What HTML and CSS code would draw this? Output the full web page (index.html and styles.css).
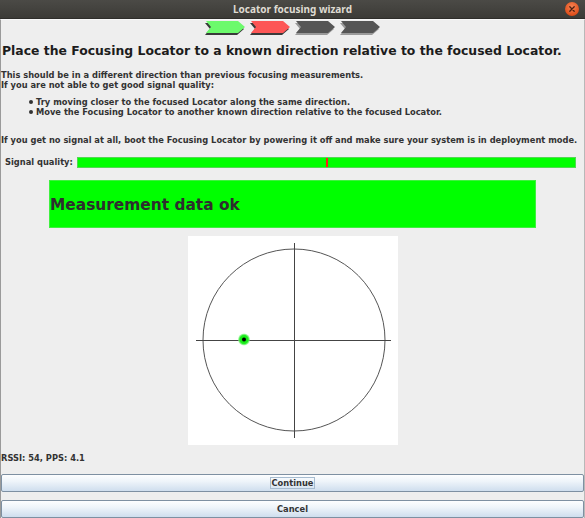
FILE: index.html
```html
<!DOCTYPE html>
<html>
<head>
<meta charset="utf-8">
<link rel="stylesheet" href="styles.css">
</head>
<body>
<div class="window">
  <div class="titlebar">
    <span></span>
    <span class="title">Locator focusing wizard</span>
    <span class="close"><svg width="14" height="14" viewBox="0 0 14 14"><path d="M4.8 4.8L9.2 9.2M9.2 4.8L4.8 9.2" stroke="#4a2012" stroke-width="1.3" stroke-linecap="round"/></svg></span>
  </div>
  <div class="content">
    <div class="steps">
      <svg class="step" width="40" height="14" viewBox="0 0 40 14"><polygon points="0,2 32,2 39,8 32,14 0,14 5,8" fill="#3a3a3a"/><polygon points="1,0 33,0 40,6 33,12 1,12 6,6" fill="#6cfa6c"/></svg>
      <svg class="step" width="40" height="14" viewBox="0 0 40 14"><polygon points="0,2 32,2 39,8 32,14 0,14 5,8" fill="#3a3a3a"/><polygon points="1,0 33,0 40,6 33,12 1,12 6,6" fill="#fd5656"/></svg>
      <svg class="step" width="40" height="14" viewBox="0 0 40 14"><polygon points="0,2 32,2 39,8 32,14 0,14 5,8" fill="#9a9a9a"/><polygon points="1,0 33,0 40,6 33,12 1,12 6,6" fill="#555555"/></svg>
      <svg class="step" width="40" height="14" viewBox="0 0 40 14"><polygon points="0,2 32,2 39,8 32,14 0,14 5,8" fill="#9a9a9a"/><polygon points="1,0 33,0 40,6 33,12 1,12 6,6" fill="#555555"/></svg>
    </div>
    <h1 class="heading">Place the Focusing Locator to a known direction relative to the focused Locator.</h1>
    <p class="desc">This should be in a different direction than previous focusing measurements.<br>If you are not able to get good signal quality:</p>
    <ul class="tips">
      <li>Try moving closer to the focused Locator along the same direction.</li>
      <li>Move the Focusing Locator to another known direction relative to the focused Locator.</li>
    </ul>
    <p class="note">If you get no signal at all, boot the Focusing Locator by powering it off and make sure your system is in deployment mode.</p>
    <div class="signal">
      <span class="signal-label">Signal quality:</span>
      <div class="signal-bar"></div>
    </div>
    <div class="status">Measurement data ok</div>
    <div class="plot">
      <svg width="210" height="209" viewBox="0 0 210 209">
        <defs>
          <radialGradient id="glow">
            <stop offset="0" stop-color="#00e600"/>
            <stop offset="0.7" stop-color="#22ee22"/>
            <stop offset="1" stop-color="#9ff79f" stop-opacity="0.6"/>
          </radialGradient>
        </defs>
        <rect width="210" height="209" fill="#ffffff"/>
        <circle cx="106" cy="104" r="91" fill="none" stroke="#555" stroke-width="1"/>
        <line x1="8" y1="104.5" x2="203" y2="104.5" stroke="#444" stroke-width="1"/>
        <line x1="106.5" y1="7" x2="106.5" y2="202" stroke="#444" stroke-width="1"/>
        <circle cx="56" cy="103.5" r="6" fill="url(#glow)"/>
        <circle cx="56" cy="103.5" r="2" fill="#000"/>
      </svg>
    </div>
    <div class="rssi">RSSI: 54, PPS: 4.1</div>
    <button class="btn"><span class="focus">Continue</span></button>
    <button class="btn btn-cancel">Cancel</button>
  </div>
</div>
</body>
</html>
```

FILE: styles.css
```css
html, body {
  margin: 0;
  padding: 0;
}
body {
  width: 585px;
  height: 518px;
  overflow: hidden;
  background: #eeeeee;
  font-family: "DejaVu Sans", sans-serif;
  font-weight: bold;
  color: #333333;
}
.window {
  display: flex;
  flex-direction: column;
  height: 518px;
}
.titlebar {
  flex: none;
  height: 19px;
  display: grid;
  grid-template-columns: 1fr auto 1fr;
  align-items: center;
  background: linear-gradient(#4b4a46, #3c3b37);
  border-bottom: 1px solid #2f2e2b;
  box-sizing: border-box;
}
.title {
  font-family: "Noto Sans", sans-serif;
  font-weight: 700;
  font-size: 10px;
  color: #dfdbd2;
}
.close {
  justify-self: end;
  margin-right: 6px;
  width: 14px;
  height: 14px;
  border-radius: 50%;
  background: radial-gradient(circle at 50% 35%, #f58455, #e0501c 70%, #c4420f);
  display: flex;
}
.content {
  flex: 1;
  display: flex;
  flex-direction: column;
  border-left: 1px solid #9a9a9a;
  border-right: 1px solid #b8b8b8;
  border-top: 1px solid #f8f8f8;
  min-height: 0;
}
.steps {
  display: flex;
  justify-content: center;
  gap: 5px;
  margin-top: 1px;
  height: 14px;
}
.step {
  display: block;
}
.heading {
  margin: 8px 0 0 1px;
  font-size: 12.4px;
  line-height: 15px;
  color: #1c1c1c;
  white-space: nowrap;
}
.desc {
  margin: 12px 0 0 0;
  font-size: 8.3px;
  line-height: 10.3px;
}
.tips {
  list-style: none;
  margin: 6px 0 0 0;
  padding: 0 0 0 28px;
  font-size: 8.3px;
  line-height: 10.3px;
}
.tips li {
  display: flex;
  align-items: center;
}
.tips li::before {
  content: "";
  width: 4px;
  height: 4px;
  border-radius: 50%;
  background: #333;
  margin-right: 3px;
  flex: none;
}
.note {
  margin: 17.5px 0 0 0;
  font-size: 8.3px;
  line-height: 10.3px;
  white-space: nowrap;
}
.signal {
  display: flex;
  align-items: center;
  margin-top: 12px;
  height: 11px;
  padding: 0 8px 0 4px;
}
.signal-label {
  font-size: 8.3px;
  line-height: 10.3px;
  margin-right: 4px;
}
.signal-bar {
  flex: 1;
  height: 11px;
  box-sizing: border-box;
  border: 1px solid #52d852;
  background: linear-gradient(to right, #00ff00 0, #00ff00 248px, #ff1a1a 248px, #ff1a1a 250px, #00ff00 250px);
}
.status {
  margin: 12px 48px 0 48px;
  height: 49px;
  box-sizing: border-box;
  background: #00ff00;
  border: 1px solid #3ff03f;
  display: flex;
  align-items: center;
  padding: 3px 0 0 0;
  font-size: 15.4px;
  color: #2e2e2e;
}
.plot {
  align-self: center;
  margin-top: 8px;
  width: 210px;
  height: 209px;
}
.plot svg {
  display: block;
}
.rssi {
  margin-top: 8px;
  font-size: 8.3px;
  line-height: 10.3px;
}
.btn {
  display: flex;
  align-items: center;
  justify-content: center;
  width: 100%;
  height: 18px;
  margin: 11px 0 0 0;
  padding: 0;
  box-sizing: border-box;
  border: 1px solid #7e90a2;
  border-radius: 2px;
  background: linear-gradient(#fdfeff, #eef4fa 40%, #cfdeee);
  font-family: "DejaVu Sans", sans-serif;
  font-weight: bold;
  font-size: 8.3px;
  color: #333;
  flex: none;
}
.btn-cancel {
  margin-top: 8px;
}
.focus {
  border: 1px solid #a6bbcf;
  padding: 0 1px;
  line-height: 10px;
}
```
